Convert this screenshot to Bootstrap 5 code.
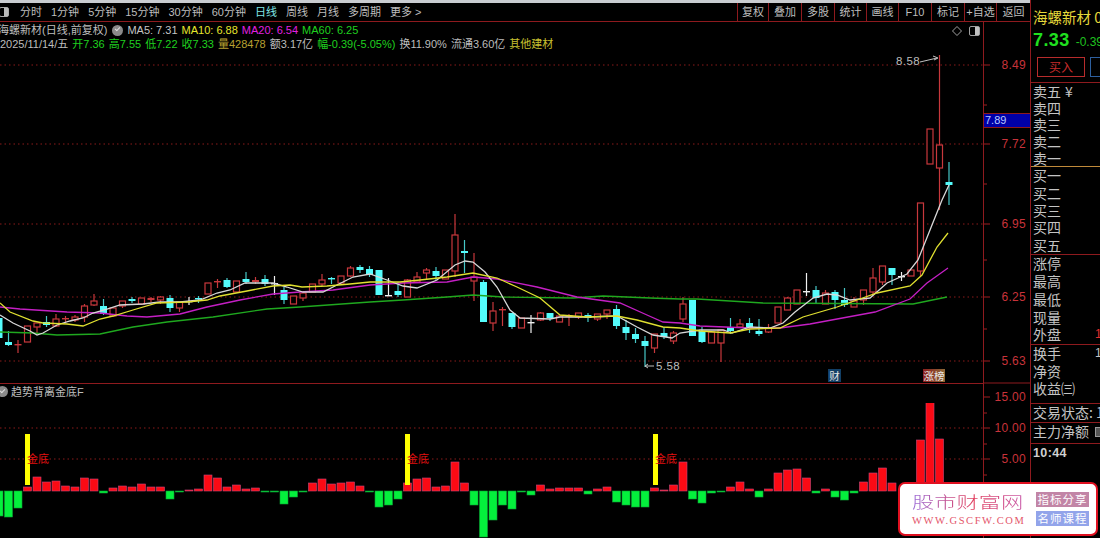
<!DOCTYPE html>
<html lang="zh-CN">
<head>
    <meta charset="UTF-8">
    <meta name="viewport" content="width=device-width, initial-scale=1.0">
    <title>海螺新材</title>
    <link href="https://cdn.jsdelivr.net/npm/bootstrap@5.3.0/dist/css/bootstrap.min.css" rel="stylesheet">
    <style>
        html, body { background: #000; margin: 0; overflow: hidden; }
        .app-shell { position: relative; width: 1100px; height: 538px; background: #000; overflow: hidden; color: #bdbdbd;
            font-family: "Liberation Sans", "Noto Sans CJK SC", sans-serif; font-size: 11px; }
        .top-strip { height: 3px; background: #c9ccd0; flex: none; }
        .left-col { width: 1030px; flex: none; }
        .tool-bar { height: 19px; border-bottom: 1px solid #8e1a1e; flex: none; line-height: 19px; white-space: nowrap; }
        .tool-left { gap: 9px; padding-left: 20px; position: relative; }
        .tool-left .on { color: #7fe6e6; }
        .win-icon { position: absolute; left: -1px; top: 4px; width: 10px; height: 10px; border: 1px solid #aaa; border-radius: 2px; }
        .win-icon::after { content: ""; position: absolute; right: 0; top: 0; bottom: 0; width: 4px; background: #bbb; }
        .tool-btn { border-left: 1px solid #8e1a1e; text-align: center; }
        .w31 { width: 31px; } .w32 { width: 32px; } .w33 { width: 33px; } .w34 { width: 34px; }
        .plot-col { width: 983px; flex: none; }
        .axis-col { width: 47px; flex: none; border-left: 1px solid #8e1a1e; }
        .quote-head { height: 30px; flex: none; position: relative; line-height: 14px; padding-top: 1px; white-space: nowrap; }
        .quote-line { gap: 4px; }
        .txt-white { color: #c4c4c4; }
        .txt-yellow { color: #e6e62c; }
        .txt-pink { color: #e020e0; }
        .txt-green { color: #1fd01f; }
        .txt-olive { color: #b8a030; }
        .txt-gold { color: #c8c030; }
        .name-shift { margin-left: -2px; }
        .ok-dot { display: inline-block; position: relative; width: 11px; height: 11px; border-radius: 50%; background: #8a8a8a; margin: 0 0 0 1px; flex: none; }
        .ok-dot::after { content: ""; position: absolute; left: 3px; top: 2.5px; width: 5px; height: 3px; border-left: 1px solid #ddd; border-bottom: 1px solid #ddd; transform: rotate(-45deg); }
        .head-icons { position: absolute; right: 3px; top: 4px; gap: 7px; }
        .main-plot, .sub-plot { display: block; flex: none; }
        .sub-title { height: 20px; flex: none; border-top: 1px solid #8e1a1e; line-height: 17px; font-size: 11px; white-space: nowrap; }
        .sub-title .ok-dot { margin: 0 3px 0 -3px; vertical-align: -1px; }
        .side-col { width: 70px; flex: none; border-left: 1px solid #8e1a1e; margin-top: -3px; background: #000; position: relative; overflow: hidden; white-space: nowrap;
            font-family: "Noto Sans CJK SC", "Liberation Sans", sans-serif; font-size: 14px; color: #c4c4c4; }
        .stock-name { height: 28px; padding: 7px 0 0 2px; color: #e6d83a; font-size: 14.5px; line-height: 20px; }
        .stock-price { height: 26px; padding-left: 2px; line-height: 25px; }
        .price-big { color: #1fe01f; font: bold 18px "Liberation Sans", sans-serif; letter-spacing: .4px; }
        .price-chg { color: #1fc01f; font: 12px "Liberation Sans", sans-serif; margin-left: 6px; }
        .trade-btns { height: 29px; gap: 5px; padding: 3px 0 0 6px; border-bottom: 1px solid #8e1a1e; }
        .trade-buy, .trade-sell { width: 48px; height: 20px; line-height: 17px; font-size: 12px; text-align: center; flex: none; }
        .trade-buy { border: 1px solid #b82c2c; color: #c82c2c; }
        .trade-sell { border: 1px solid #2d5f9e; }
        .q-sec { border-bottom: 1px solid #8e1a1e; padding-left: 2px; display: flex; flex-direction: column; }
        .q-sec.orange-line { border-bottom-color: #c08a3a; }
        .q-row { display: flex; height: 17.3px; line-height: 17px; position: relative; }
        .sell-sec .q-row { height: 16.7px; }
        .info-sec .q-row { height: 17.9px; }
        .hands-sec { height: 59px; }
        .one-sec { height: 19px; }
        .money-sec { height: 21px; }
        .q-val { position: absolute; left: 62px; font: 12px "Liberation Sans", sans-serif; line-height: 17px; }
        .q-yen { margin-left: 4px; }
        .red-val { color: #e03030; }
        .time-text { font: bold 12.5px "Liberation Sans", sans-serif; letter-spacing: .4px; color: #d0d0d0; padding: 2px 0 0 2px; }
        .mini-box { position: absolute; left: 62px; top: 4px; width: 8px; height: 10px; border: 1px solid #999; background: #555; }
        svg text { font-family: "Liberation Sans", "Noto Sans CJK SC", sans-serif; }
        .axis-text { fill: #c8333a; font-size: 12px; letter-spacing: .3px; }
        .low-text { fill: #bdbdbd; font-size: 11.5px; letter-spacing: .4px; }
        .gold-text { fill: #e01010; font-size: 11px; }
        .cur-price { position: absolute; left: 984px; top: 113px; width: 46px; height: 15px; background: #0000a8; border-top: 1px solid #8e1a1e; border-bottom: 1px solid #8e1a1e;
            color: #b8c8ff; font-size: 11px; line-height: 13px; padding-left: 1px; }
        .tag-cai, .tag-bang { position: absolute; top: 369px; height: 13px; line-height: 13px; font-size: 10.5px; text-align: center; color: #e8e8e8; font-family: "Noto Sans CJK SC", sans-serif; }
        .tag-cai { left: 828px; width: 13px; background: #123f66; }
        .tag-bang { left: 923px; width: 22px; background: linear-gradient(90deg, #8a1d1d, #8e6a38); }
        .site-logo { position: absolute; left: 898px; top: 482px; width: 200px; height: 54px; background: #fff; border: 2px solid #e01020; border-radius: 7px; }
        .logo-name { position: absolute; left: 12px; top: 8px; font: 300 16px/18px "Noto Sans CJK SC", sans-serif; transform: scaleX(1.39); transform-origin: left center;
            background: linear-gradient(90deg, #9a6ad8, #e03a5a 55%, #c858a8); -webkit-background-clip: text; background-clip: text; color: transparent; }
        .logo-url { position: absolute; left: 12px; top: 30px; font: 10.5px/14px "Liberation Serif", serif; letter-spacing: 1.55px; color: #e4566a; }
        .logo-tag { position: absolute; left: 136px; width: 53px; height: 15px; text-align: center; color: #fff; font: 11.5px/15px "Noto Sans CJK SC", sans-serif; letter-spacing: 1px; }
        .logo-tag.t1 { top: 8px; background: #c285a6; }
        .logo-tag.t2 { top: 27px; background: #92a4ea; }
    </style>
</head>
<body>
    <div class="app-shell d-flex flex-column">
        <div class="top-strip"></div>
        <div class="d-flex flex-grow-1">
            <div class="left-col d-flex flex-column">
                <div class="tool-bar d-flex justify-content-between">
                    <div class="tool-left d-flex">
                        <i class="win-icon"></i>
                        <span>分时</span><span>1分钟</span><span>5分钟</span><span>15分钟</span><span>30分钟</span><span>60分钟</span>
                        <span class="on">日线</span><span>周线</span><span>月线</span><span>多周期</span><span>更多 &gt;</span>
                    </div>
                    <div class="d-flex">
                        <div class="tool-btn w31">复权</div><div class="tool-btn w33">叠加</div><div class="tool-btn w33">多股</div>
                        <div class="tool-btn w32">统计</div><div class="tool-btn w32">画线</div><div class="tool-btn w33">F10</div>
                        <div class="tool-btn w33">标记</div><div class="tool-btn w32">+自选</div><div class="tool-btn w34">返回</div>
                    </div>
                </div>
                <div class="d-flex flex-grow-1">
                    <div class="plot-col d-flex flex-column">
                        <div class="quote-head">
                            <div class="quote-line d-flex align-items-center">
                                <span class="name-shift">海螺新材(日线,前复权)</span><i class="ok-dot"></i>
                                <span class="txt-white">MA5: 7.31</span><span class="txt-yellow">MA10: 6.88</span>
                                <span class="txt-pink">MA20: 6.54</span><span class="txt-green">MA60: 6.25</span>
                            </div>
                            <div class="quote-line d-flex">
                                <span>2025/11/14/五</span><span class="txt-green">开7.36</span><span class="txt-green">高7.55</span>
                                <span class="txt-green">低7.22</span><span class="txt-green">收7.33</span><span class="txt-olive">量428478</span>
                                <span>额3.17亿</span><span class="txt-green">幅-0.39(-5.05%)</span><span>换11.90%</span>
                                <span>流通3.60亿</span><span class="txt-gold">其他建材</span>
                            </div>
                            <div class="head-icons d-flex align-items-center">
                                <svg width="10" height="10" viewBox="0 0 10 10"><path d="M5 .5 9.5 5 5 9.5 .5 5Z" fill="none" stroke="#a0a0a0"/></svg>
                                <svg width="11" height="10" viewBox="0 0 11 10"><rect x=".5" y=".5" width="10" height="9" rx="1.5" fill="none" stroke="#a0a0a0"/><rect x="6" y="1" width="4" height="8" fill="#c0c0c0"/></svg>
                            </div>
                        </div>
                        <svg id="mainPlot" class="main-plot" width="983" height="331" viewBox="0 52 983 331"></svg>
                        <div class="sub-title"><i class="ok-dot"></i>趋势背离金底F</div>
                        <svg id="subPlot" class="sub-plot" width="983" height="135" viewBox="0 403 983 135"></svg>
                    </div>
                    <svg id="axisPlot" class="axis-col" width="47" height="516" viewBox="984 22 46 516"></svg>
                </div>
            </div>
            <div class="side-col">
                <div class="stock-name">海螺新材 0</div>
                <div class="stock-price"><span class="price-big">7.33</span><span class="price-chg">-0.39</span></div>
                <div class="trade-btns d-flex"><div class="trade-buy">买入</div><div class="trade-sell"></div></div>
                <div class="q-sec sell-sec orange-line">
                    <div class="q-row">卖五<span class="q-yen">¥</span></div><div class="q-row">卖四</div><div class="q-row">卖三</div><div class="q-row">卖二</div><div class="q-row">卖一</div>
                </div>
                <div class="q-sec">
                    <div class="q-row">买一</div><div class="q-row">买二</div><div class="q-row">买三</div><div class="q-row">买四</div><div class="q-row">买五</div>
                </div>
                <div class="q-sec info-sec">
                    <div class="q-row">涨停</div><div class="q-row">最高</div><div class="q-row">最低</div><div class="q-row">现量</div>
                    <div class="q-row">外盘<span class="q-val red-val">1</span></div>
                </div>
                <div class="q-sec hands-sec">
                    <div class="q-row">换手<span class="q-val">1</span></div><div class="q-row">净资</div><div class="q-row">收益㈢</div>
                </div>
                <div class="q-sec one-sec"><div class="q-row">交易状态: 1</div></div>
                <div class="q-sec money-sec"><div class="q-row">主力净额<i class="mini-box"></i></div></div>
                <div class="time-text">10:44</div>
            </div>
        </div>

        <div class="cur-price">7.89</div>
        <div class="tag-cai">财</div>
        <div class="tag-bang">涨榜</div>

        <div class="site-logo">
            <div class="logo-name">股市财富网</div>
            <div class="logo-url">WWW.GSCFW.COM</div>
            <div class="logo-tag t1">指标分享</div>
            <div class="logo-tag t2">名师课程</div>
        </div>
    </div>

    <script>
        // r = hollow red, c = solid cyan, w = white doji: [type, high, top, bottom, low]
        const candles = [
            ['c',317,318,338,338],['c',331,342,345,346],['r',340,344,345,353],['r',326,326,342,342],['r',323,323,327,335],
            ['c',316,322,325,327],['r',314,319,326,327],['r',316,318,319,323],['r',315,317,320,322],['r',304,306,317,322],
            ['r',294,301,305,306],['c',299,306,314,315],['r',307,308,316,317],['r',301,301,306,308],['c',297,299,301,303],
            ['r',298,298,304,305],['r',297,298,300,302],['r',296,297,300,304],['c',295,298,308,312],['r',302,302,308,312],
            ['w',297,301,301,305],['c',296,298,299,303],['r',283,283,294,294],['r',279,281,282,288],['c',278,280,287,288],
            ['r',281,281,292,292],['c',272,279,282,284],['r',277,280,282,284],['c',275,279,284,286],['w',276,283,283,295],
            ['c',287,290,300,304],['r',296,296,304,304],['r',292,293,298,301],['r',284,284,292,292],['r',274,280,284,286],
            ['c',277,278,279,284],['r',276,276,283,283],['r',266,268,276,277],['c',265,267,270,273],['c',266,269,275,277],
            ['c',270,270,295,295],['w',278,295,295,296],['c',282,291,295,297],['r',279,280,297,297],['r',272,277,282,283],
            ['r',268,270,273,279],['c',267,271,276,280],['r',270,270,279,279],['r',214,235,271,277],['c',240,251,253,273],
            ['r',253,277,281,301],['c',280,282,322,322],['r',302,311,323,331],['r',307,309,310,326],['c',313,313,327,329],
            ['r',318,318,328,328],['w',315,322,322,333],['r',312,313,320,321],['c',313,313,318,321],['r',316,316,322,322],
            ['r',314,315,317,326],['r',313,313,317,319],['c',313,315,318,322],['r',314,314,319,321],['r',310,310,314,319],
            ['c',305,309,326,329],['c',320,327,333,340],['c',328,334,339,343],['c',336,341,346,367],['r',334,334,348,353],
            ['c',327,333,337,339],['r',331,333,341,344],['r',297,304,319,322],['c',300,300,336,336],['c',327,331,342,343],
            ['r',332,332,343,343],['r',330,330,343,362],['c',318,327,331,334],['r',319,324,327,327],['c',318,323,328,333],
            ['c',319,331,334,336],['r',324,328,332,333],['r',307,307,323,323],['r',297,298,310,310],['r',290,290,304,304],
            ['w',273,291,291,296],['c',286,290,298,303],['r',290,293,304,304],['c',290,292,300,309],['c',288,300,305,307],
            ['r',297,301,307,307],['r',290,290,300,305],['r',268,278,292,294],['r',266,266,282,285],['c',268,268,275,285],
            ['w',272,276,276,281],['r',270,270,276,276],['r',203,203,271,277],['r',129,129,164,164],['r',55,145,168,210],
            ['c',162,182,185,205]
        ];

        const lines = [
            { color: '#1fa81f', pts: '0,332 33,333 57,335 100,334 133,327 167,322 213,317 267,309 300,307 370,302 403,300 447,297 473,295 503,297 573,298 603,296 650,298 680,299 697,299 763,303 913,304 947,297' },
            { color: '#c41fc4', pts: '0,307 20,309 67,312 100,313 127,316 147,317 180,314 207,307 240,300 273,294 300,292 333,290 370,285 403,283 447,282 473,277 497,279 537,287 577,297 620,303 647,315 663,322 680,323 700,326 750,328 780,328 810,324 875,312 910,299 927,283 948,268' },
            { color: '#d8d8d8', pts: '0,315 13,323 30,331 37,335 43,333 57,325 70,321 83,318 93,313 107,309 120,305 143,304 160,302 180,302 200,300 217,293 230,290 245,283 273,283 287,287 303,292 323,292 337,285 353,277 370,274 387,280 403,286 417,288 437,280 455,265 465,261 473,262 485,272 497,287 510,310 520,318 550,319 560,317 587,317 617,316 637,327 653,335 672,338 680,333 700,330 723,330 732,333 750,327 770,328 783,323 795,312 813,298 827,294 837,295 850,300 870,298 887,283 907,274 918,260 930,230 942,200 949,185' },
            { color: '#e0e030', pts: '0,303 10,312 33,321 43,323 67,324 83,326 100,319 113,316 133,310 157,303 187,302 207,300 220,296 247,291 273,286 290,285 302,287 327,286 350,284 370,282 400,282 420,280 447,277 473,273 497,278 517,287 540,298 560,315 587,317 617,316 637,320 663,327 680,328 700,331 730,333 750,329 780,328 803,317 837,307 857,300 877,293 910,286 922,275 937,247 948,233' }
        ];

        // indicator bars, one per candle, pixels from the zero line
        const bars = [-25,-26,-17,4,14,9,10,5,4,13,12,-2,3,5,4,7,4,4,-8,-1,1,2,16,13,4,6,2,3,-1,-1,-13,-6,-1,8,12,7,8,9,5,-1,-16,-14,-8,8,12,13,4,5,29,8,-14,-46,-29,-14,-18,-1,-4,6,2,3,3,3,-3,2,4,-11,-14,-16,-16,3,1,6,29,-8,-12,-2,-1,4,9,2,-6,2,18,21,22,13,-2,2,-6,-9,-2,9,18,23,8,0,0,51,89,52,0];

        const candleX = i => -1 + 9.5 * i;
        const zeroY = 491;
        const gridColor = '#8a1a1a';

        function gridLine(y) {
            return `<line x1="0" x2="983" y1="${y}" y2="${y}" stroke="${gridColor}" stroke-width="1" stroke-dasharray="1.5 3"/>`;
        }

        // main chart
        let main = [65, 144, 224, 297, 361].map(gridLine).join('');
        candles.forEach((c, i) => {
            const x = candleX(i);
            const col = c[0] === 'r' ? '#c8383c' : c[0] === 'c' ? '#54fcfc' : '#f0f0f0';
            const wick = c[0] === 'c' ? '#46c8c8' : col;
            if (c[1] < c[2]) main += `<line x1="${x}" x2="${x}" y1="${c[1]}" y2="${c[2]}" stroke="${wick}" stroke-width="1.2"/>`;
            if (c[4] > c[3]) main += `<line x1="${x}" x2="${x}" y1="${c[3]}" y2="${c[4]}" stroke="${wick}" stroke-width="1.2"/>`;
            const h = c[3] - c[2];
            if (h < 2.5) {
                main += `<rect x="${x - 3.5}" y="${c[2]}" width="7" height="${Math.max(h, 1.4)}" fill="${col}"/>`;
            } else if (c[0] === 'c') {
                main += `<rect x="${x - 3.5}" y="${c[2]}" width="7" height="${h}" fill="${col}"/>`;
            } else {
                main += `<rect x="${x - 3}" y="${c[2]}" width="6" height="${h}" fill="#000" stroke="${col}" stroke-width="1.2"/>`;
            }
        });
        lines.forEach(l => {
            main += `<polyline points="${l.pts}" fill="none" stroke="${l.color}" stroke-width="1.3"/>`;
        });
        main += '<text class="low-text" x="896" y="65">8.58</text>';
        main += '<path d="M920 62 937 58M933 56 938 58 934 60" fill="none" stroke="#c0c0c0"/>';
        main += '<text class="low-text" x="656" y="370">5.58</text>';
        main += '<path d="M654 366H645M648 364 645 366 648 368" fill="none" stroke="#c0c0c0"/>';
        document.getElementById('mainPlot').innerHTML = main;

        // indicator
        let sub = [428, 459].map(gridLine).join('');
        bars.forEach((v, i) => {
            if (!v) return;
            const x = candleX(i) - 4;
            const y = v > 0 ? zeroY - v : zeroY;
            const fill = v > 0 ? '#fb0a14' : '#04f03c';
            const edge = v > 0 ? '#c8487a' : '#0aa034';
            sub += `<rect x="${x}" y="${y}" width="8" height="${Math.abs(v)}" fill="${fill}" stroke="${edge}" stroke-width=".6"/>`;
        });
        [25, 405, 653].forEach(x => {
            sub += `<rect x="${x}" y="434" width="5" height="51" fill="#ffff00"/>`;
            sub += `<text class="gold-text" x="${x + 2}" y="463">金底</text>`;
        });
        document.getElementById('subPlot').innerHTML = sub;

        // price axis
        const labels = [[65,'8.49'],[144,'7.72'],[224,'6.95'],[297,'6.25'],[361,'5.63'],[397,'15.00'],[428,'10.00'],[459,'5.00']];
        let axis = '';
        labels.forEach(l => {
            axis += `<line x1="984" x2="990" y1="${l[0]}" y2="${l[0]}" stroke="#a01c20"/>`;
            axis += `<text class="axis-text" x="1026" y="${l[0] + 4}" text-anchor="end">${l[1]}</text>`;
        });
        [105, 184, 260, 329, 413, 444, 475].forEach(y => {
            axis += `<line x1="984" x2="987" y1="${y}" y2="${y}" stroke="#a01c20"/>`;
        });
        axis += `<line x1="984" x2="1030" y1="383" y2="383" stroke="#8e1a1e"/>`;
        document.getElementById('axisPlot').innerHTML = axis;
    </script>
    <script src="https://cdn.jsdelivr.net/npm/bootstrap@5.3.0/dist/js/bootstrap.bundle.min.js"></script>
</body>
</html>
